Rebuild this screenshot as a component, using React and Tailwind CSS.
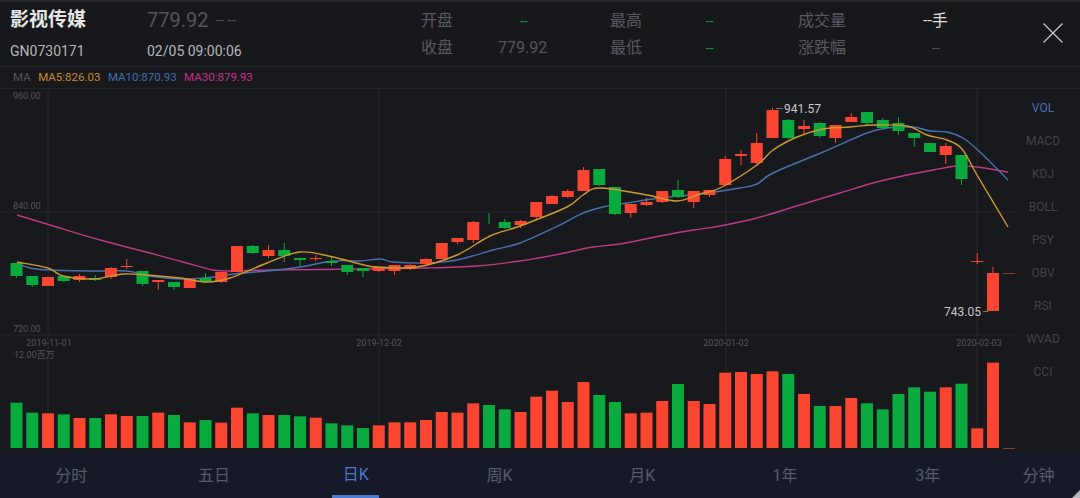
const FONT = 'font-["Roboto","Noto_Sans_CJK_SC",sans-serif]'

const RED = '#fa4631'
const GREEN = '#0aab3e'

// [top, bottom, wickTop, wickBottom, colour]
const candles = [
  [263, 276, 263, 278, 'g'], [276, 285, 276, 287, 'g'], [277, 286, 277, 286, 'r'], [276, 281, 276, 282, 'g'],
  [276, 280, 274, 282, 'r'], [278, 280, 275, 281, 'g'], [268, 277, 267, 279, 'r'], [266, 267, 259, 269, 'r'],
  [271, 284, 271, 286, 'g'], [280, 282, 280, 290, 'r'], [282, 287, 282, 290, 'g'], [279, 288, 278, 288, 'r'],
  [278, 282, 273, 283, 'g'], [272, 282, 272, 283, 'r'], [246, 272, 246, 272, 'r'], [246, 253, 245, 254, 'g'],
  [250, 256, 245, 258, 'r'], [250, 256, 243, 262, 'g'], [258, 260, 258, 266, 'g'], [258, 259, 255, 261, 'r'],
  [261, 263, 257, 266, 'g'], [265, 272, 265, 275, 'g'], [268, 271, 268, 277, 'g'], [267, 271, 267, 272, 'r'],
  [265, 271, 265, 275, 'r'], [265, 269, 264, 270, 'r'], [259, 264, 258, 264, 'r'], [243, 259, 243, 259, 'r'],
  [238, 242, 238, 244, 'r'], [222, 240, 221, 243, 'r'], [218, 218, 213, 224, 'g'], [222, 228, 219, 229, 'g'],
  [221, 225, 220, 228, 'r'], [202, 217, 202, 219, 'r'], [196, 204, 195, 204, 'r'], [191, 197, 189, 198, 'r'],
  [170, 191, 167, 191, 'r'], [169, 185, 169, 186, 'g'], [187, 214, 187, 215, 'g'], [204, 213, 204, 218, 'r'],
  [202, 205, 198, 206, 'r'], [191, 202, 191, 203, 'r'], [190, 197, 180, 198, 'g'], [191, 202, 191, 208, 'r'],
  [190, 195, 190, 197, 'r'], [159, 185, 156, 185, 'r'], [154, 156, 150, 165, 'r'], [143, 163, 133, 166, 'r'],
  [110, 138, 108, 138, 'r'], [120, 138, 119, 139, 'g'], [126, 129, 120, 134, 'r'], [123, 136, 122, 138, 'g'],
  [125, 138, 125, 143, 'r'], [117, 122, 113, 122, 'r'], [112, 123, 112, 126, 'g'], [120, 128, 118, 130, 'g'],
  [123, 131, 117, 135, 'g'], [133, 138, 133, 147, 'g'], [143, 152, 143, 152, 'g'], [146, 155, 143, 164, 'r'],
  [155, 179, 155, 185, 'g'], [261, 262, 253, 264, 'r'], [273, 311, 267, 311, 'r'],
]

const volumes = [
  [188, 'g'], [218, 'g'], [220, 'r'], [223, 'g'], [234, 'r'], [234, 'g'], [223, 'r'], [228, 'r'], [228, 'g'],
  [218, 'r'], [225, 'g'], [247, 'r'], [240, 'g'], [248, 'r'], [203, 'r'], [220, 'g'], [225, 'r'], [225, 'g'],
  [229, 'g'], [233, 'r'], [250, 'g'], [256, 'g'], [264, 'g'], [256, 'r'], [247, 'r'], [247, 'r'], [240, 'r'],
  [216, 'r'], [218, 'r'], [190, 'r'], [195, 'g'], [208, 'g'], [216, 'r'], [170, 'r'], [152, 'r'], [186, 'r'],
  [126, 'r'], [165, 'g'], [186, 'g'], [220, 'r'], [218, 'r'], [183, 'r'], [132, 'g'], [183, 'r'], [192, 'r'],
  [98, 'r'], [96, 'r'], [102, 'r'], [94, 'r'], [102, 'g'], [162, 'r'], [198, 'g'], [198, 'r'], [174, 'r'],
  [190, 'g'], [208, 'g'], [162, 'g'], [142, 'g'], [155, 'g'], [142, 'r'], [131, 'g'], [265, 'r'], [68, 'r'],
]

const ma5 = '17,262 48,268 63,276 93,279 123,274 147,275 180,278 207,282 230,278 267,263 300,252 333,257 360,264 377,267 417,267 457,255 490,236 520,226 567,207 583,195 600,188 647,195 677,201 700,194 720,188 757,165 773,150 797,137 823,129 850,127 873,125 907,126 927,135 947,140 962,149 977,175 1008,227'
const ma10 = '17,263 30,268 50,270 100,271 127,271 150,276 183,279 213,277 233,274 267,271 300,267 333,261 360,261 380,259 393,262 427,263 457,260 493,250 520,243 560,225 583,213 603,207 627,203 660,198 700,194 740,188 757,184 773,173 823,152 867,133 887,128 913,127 930,131 947,132 963,138 980,152 1008,180'
const ma30 = '17,215 50,225 100,240 150,253 183,262 213,270 233,271 267,270 360,269 427,268 477,266 520,261 560,254 593,247 620,244 660,236 693,230 720,226 757,218 800,205 840,193 873,183 907,175 933,170 957,166 977,167 1008,172'

const indicators = ['VOL', 'MACD', 'KDJ', 'BOLL', 'PSY', 'OBV', 'RSI', 'WVAD', 'CCI']
const tabs = ['分时', '五日', '日K', '周K', '月K', '1年', '3年']

function candleX(i) {
  return 16.5 + i * 15.75
}

// rounds the corners of the moving average lines
function smoothPath(points) {
  const p = points.split(' ').map((s) => s.split(',').map(Number))
  let d = `M${p[0][0]} ${p[0][1]}`
  for (let i = 0; i < p.length - 1; i++) {
    const a = p[i - 1] || p[i]
    const b = p[i]
    const c = p[i + 1]
    const e = p[i + 2] || c
    const c1x = b[0] + (c[0] - a[0]) / 6
    const c1y = b[1] + (c[1] - a[1]) / 6
    const c2x = c[0] - (e[0] - b[0]) / 6
    const c2y = c[1] - (e[1] - b[1]) / 6
    d += ` C${c1x} ${c1y} ${c2x} ${c2y} ${c[0]} ${c[1]}`
  }
  return d
}

function Chart() {
  return (
    <svg width="1016" height="363" viewBox="0 89 1016 363" className="block shrink-0">
      {[48, 379, 726, 977].map((x) => (
        <line key={x} x1={x} x2={x} y1="89" y2="448" stroke="#292a2e" />
      ))}
      {[212, 335].map((y) => (
        <line key={y} x1="0" x2="1016" y1={y} y2={y} stroke="#25262a" />
      ))}

      <path d={smoothPath(ma30)} fill="none" stroke="#bd3a86" strokeWidth="1.4" />
      <path d={smoothPath(ma10)} fill="none" stroke="#4a70ad" strokeWidth="1.4" />

      {candles.map(([top, bottom, wickTop, wickBottom, c], i) => {
        const x = candleX(i)
        const color = c === 'r' ? RED : GREEN
        return (
          <g key={i} fill={color}>
            <rect x={x - 0.5} y={wickTop} width="1" height={wickBottom - wickTop} />
            <rect x={x - 6} y={top} width="12" height={bottom - top} />
          </g>
        )
      })}

      <path d={smoothPath(ma5)} fill="none" stroke="#cc9a30" strokeWidth="1.4" />

      <rect x="1003" y="273" width="12" height="1" fill="#8a4034" />
      <rect x="776" y="108" width="7" height="1" fill="#777" />
      <rect x="983" y="311" width="5" height="1" fill="#777" />

      {volumes.map(([top, c], i) => (
        <rect key={i} x={candleX(i) - 6} y={340 + top / 3} width="12" height={448 - (340 + top / 3)} fill={c === 'r' ? RED : GREEN} />
      ))}
      <rect x="1003" y="448" width="12" height="1" fill="#8a4034" />

      <g fontSize="9" fill="#55575c">
        <text x="13" y="99">960.00</text>
        <text x="13" y="209">840.00</text>
        <text x="13" y="332">720.00</text>
        <text x="14" y="358">12.00百万</text>
        <text x="49" y="346" textAnchor="middle">2019-11-01</text>
        <text x="379" y="346" textAnchor="middle">2019-12-02</text>
        <text x="726" y="346" textAnchor="middle">2020-01-02</text>
        <text x="979" y="346" textAnchor="middle">2020-02-03</text>
      </g>
      <g fontSize="12" fill="#c8c9cc">
        <text x="784" y="113">941.57</text>
        <text x="944" y="316">743.05</text>
      </g>
    </svg>
  )
}

export default function App() {
  return (
    <div className={`${FONT} w-[1080px] h-[498px] flex flex-col overflow-hidden bg-[#18191c] relative`}>
      <div className="h-[67px] shrink-0 flex border-b border-[#26272b] bg-[#17181c] border-t-2 border-t-[#242529]">
        <div className="w-[147px] pl-[10px] flex flex-col">
          <div className="h-[36px] flex items-center text-[19px] font-bold text-[#e6e6e6]">影视传媒</div>
          <div className="text-[14px] leading-[26px] text-[#b4b5b8]">GN0730171</div>
        </div>
        <div className="w-[274px] flex flex-col">
          <div className="h-[36px] flex items-center gap-[7px] text-[20px] text-[#55575c]">
            <span>779.92</span>
            <span className="text-[15px]">-- --</span>
          </div>
          <div className="text-[14px] leading-[26px] text-[#b4b5b8]">02/05 09:00:06</div>
        </div>
        <div className="w-[77px] flex flex-col text-[16px] text-[#575a61]">
          <div className="h-[38px] flex items-center">开盘</div>
          <div className="leading-[16px]">收盘</div>
        </div>
        <div className="w-[112px] flex flex-col text-[16px] text-[#55575c]">
          <div className="h-[38px] flex items-center pl-[22px] text-[14px] text-[#0e9a44]">--</div>
          <div className="leading-[16px]">779.92</div>
        </div>
        <div className="w-[96px] flex flex-col text-[16px] text-[#575a61]">
          <div className="h-[38px] flex items-center">最高</div>
          <div className="leading-[16px]">最低</div>
        </div>
        <div className="w-[92px] flex flex-col text-[14px] text-[#0e9a44]">
          <div className="h-[38px] flex items-center">--</div>
          <div className="leading-[16px]">--</div>
        </div>
        <div className="w-[125px] flex flex-col text-[16px] text-[#575a61]">
          <div className="h-[38px] flex items-center">成交量</div>
          <div className="leading-[16px]">涨跌幅</div>
        </div>
        <div className="w-[120px] flex flex-col">
          <div className="h-[38px] flex items-center text-[16px] text-[#dcdcdc]">--手</div>
          <div className="leading-[16px] pl-[9px] text-[14px] text-[#55575c]">--</div>
        </div>
        <div className="flex items-center">
          <svg width="20" height="20" viewBox="0 0 20 20" stroke="#d0d1d3" strokeWidth="1.1" className="mb-[2px]">
            <line x1="0.5" y1="0.5" x2="19.5" y2="19.5" />
            <line x1="19.5" y1="0.5" x2="0.5" y2="19.5" />
          </svg>
        </div>
      </div>

      <div className="h-[22px] shrink-0 flex items-center gap-[7.5px] pl-[13px] text-[11.5px] border-b border-[#232428]">
        <span className="text-[#55575c]">MA</span>
        <span className="text-[#c98a2e]">MA5:826.03</span>
        <span className="text-[#3f6cb0]">MA10:870.93</span>
        <span className="text-[#c4308f]">MA30:879.93</span>
      </div>

      <div className="flex h-[363px] shrink-0">
        <Chart />
        <div className="w-[54px] shrink-0 flex flex-col items-center pt-[2px]">
          {indicators.map((name, i) => (
            <div key={name} className={`h-[33px] flex items-center text-[12px] ${i === 0 ? 'text-[#4a6fa8]' : 'text-[#434549]'}`}>
              {name}
            </div>
          ))}
        </div>
      </div>

      <div className="flex-1 flex bg-[#161a28] text-[16px] text-[#565c6a]">
        <div className="w-[999px] flex">
          {tabs.map((tab) => (
            <div key={tab} className="flex-1 flex justify-center">
              {tab === '日K' ? (
                <div className="w-[47px] h-full flex items-center justify-center pt-[2px] border-b-[3px] border-[#4f7bd0] text-[#4a78c8] -translate-x-[1px]">{tab}</div>
              ) : (
                <div className="h-full flex items-center pt-[2px]">{tab}</div>
              )}
            </div>
          ))}
        </div>
        <div className="flex-1 flex items-center justify-center pt-[2px] -translate-x-[1px]">分钟</div>
      </div>

      <svg width="8" height="8" viewBox="0 0 8 8" className="absolute right-0 bottom-0">
        <path d="M8 0 L8 8 L0 8 Z" fill="#b8bac0" />
      </svg>
    </div>
  )
}
